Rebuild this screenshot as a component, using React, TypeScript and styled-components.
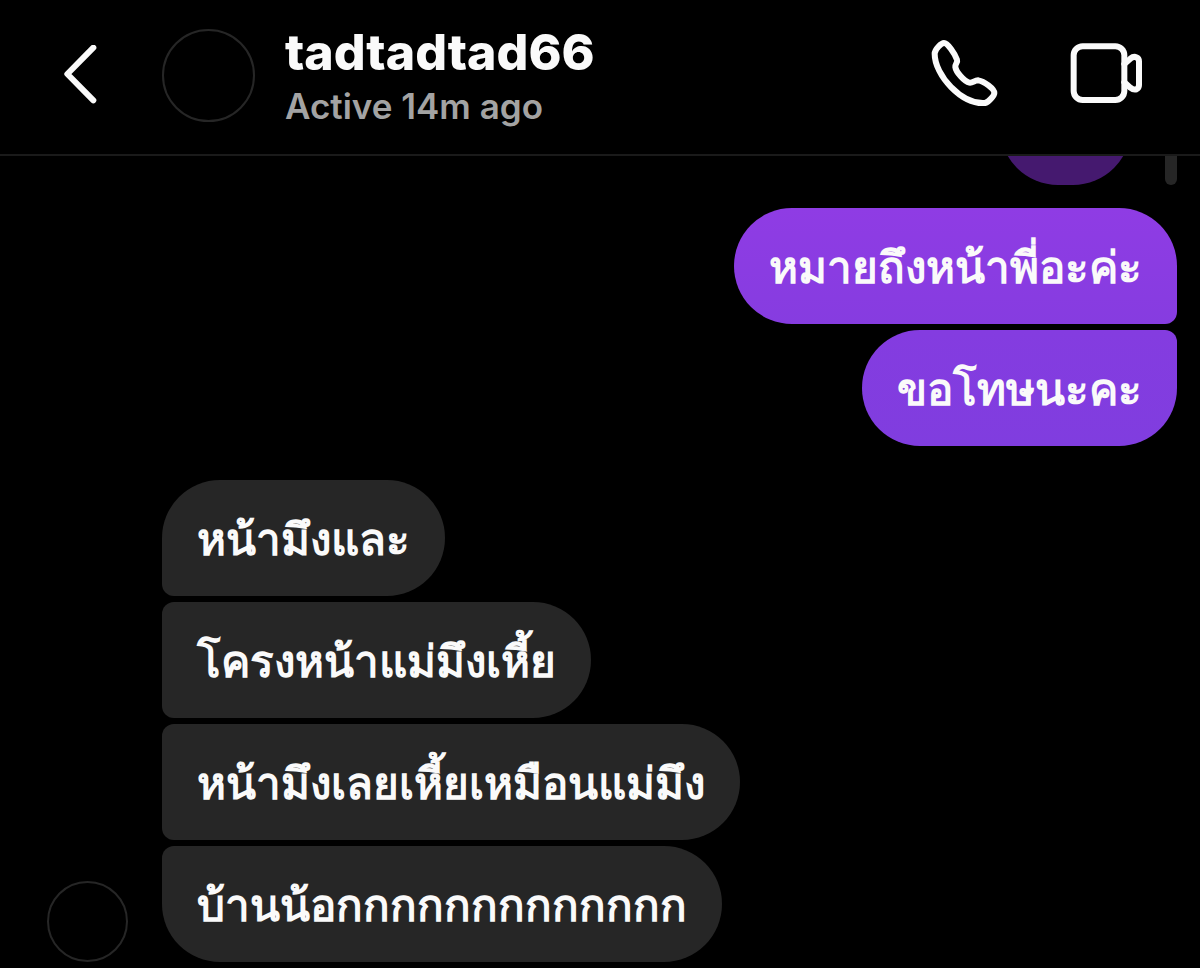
import React from 'react';
import styled, { createGlobalStyle } from 'styled-components';

const GlobalStyle = createGlobalStyle`
  *, *::before, *::after { box-sizing: border-box; }
  body {
    margin: 0;
    background: #000;
    color: #fafafa;
    font-family: Inter, "Liberation Sans", sans-serif;
  }
`;

const Screen = styled.div`
  min-height: 100vh;
  display: flex;
  flex-direction: column;
  overflow-x: hidden;
`;

const Header = styled.header`
  display: flex;
  align-items: center;
  padding: 21px 55px 25px 63px;
  border-bottom: 2px solid #1a1a1a;
`;

const IconButton = styled.button`
  display: flex;
  padding: 0;
  border: 0;
  background: none;
  color: #fafafa;
  cursor: pointer;

  svg {
    display: block;
    fill: none;
    stroke: currentColor;
    stroke-width: 18;
    stroke-linecap: round;
    stroke-linejoin: round;
  }
`;

const Avatar = styled.div<{ $size: number }>`
  flex: none;
  width: ${p => p.$size}px;
  height: ${p => p.$size}px;
  border: 2px solid #262626;
  border-radius: 50%;
`;

const Profile = styled.div`
  flex: 1;
  display: flex;
  align-items: center;
  gap: 30px;
  margin-left: 65px;
`;

const Name = styled.h1`
  margin: 0;
  font-size: 50px;
  line-height: 62px;
  font-weight: 800;
`;

const Status = styled.p`
  margin: 0;
  font-size: 35px;
  line-height: 46px;
  font-weight: 600;
  color: #a3a3a3;
`;

const Actions = styled.div`
  display: flex;
  gap: 69px;
`;

const Thread = styled.main`
  display: flex;
  flex-direction: column;
  padding: 0 23px 6px 47px;
`;

const ScrolledRow = styled.div`
  display: flex;
  justify-content: flex-end;
  align-items: flex-end;
  gap: 34px;
  height: 29px;
  margin-bottom: 23px;
  overflow: hidden;
`;

const ScrolledBubble = styled.div`
  flex: none;
  width: 131px;
  height: 116px;
  border-radius: 58px;
  background: #45196f;
`;

const ReplyBar = styled.div`
  flex: none;
  width: 12px;
  height: 116px;
  border-radius: 6px;
  background: #262626;
`;

const Incoming = styled.section`
  display: flex;
  align-items: flex-end;
  gap: 34px;
  margin-top: 34px;
`;

const Group = styled.div<{ $mine?: boolean }>`
  display: flex;
  flex-direction: column;
  align-items: ${p => (p.$mine ? 'flex-end' : 'flex-start')};
  gap: 6px;
`;

const Bubble = styled.p<{ $mine?: boolean; $tone?: string }>`
  margin: 0;
  padding: 28px 35px 24px;
  font-family: "Liberation Sans", sans-serif;
  font-size: 44px;
  line-height: 64px;
  font-weight: 700;
  background: ${p => p.$tone ?? '#262626'};
  border-radius: ${p => (p.$mine ? '58px 12px 12px 58px' : '12px 58px 58px 12px')};

  &:first-child {
    border-top-left-radius: 58px;
    border-top-right-radius: 58px;
  }

  &:last-child {
    border-bottom-left-radius: 58px;
    border-bottom-right-radius: 58px;
  }
`;

const sent = [
  { text: 'หมายถึงหน้าพี่อะค่ะ', tone: 'linear-gradient(#8f3ce4, #863ce0)' },
  { text: 'ขอโทษนะคะ', tone: 'linear-gradient(#843ce0, #803ddf)' },
];

const received = [
  'หน้ามึงและ',
  'โครงหน้าแม่มึงเหี้ย',
  'หน้ามึงเลยเหี้ยเหมือนแม่มึง',
  'บ้านน้อกกกกกกกกกกกกก',
];

const BackIcon = () => (
  <svg width="34" height="60" viewBox="190 134 102 180">
    <path d="M281 142L203 221L281 300" />
  </svg>
);

const PhoneIcon = () => (
  <svg width="70" height="70" viewBox="90 60 210 210">
    <path d="M132 69C143 69 164 100 171 119C174 128 165 131 166 141C168 156 193 185 208 188C218 190 224 180 235 181C252 184 283 206 283 219C283 228 264 247 255 249C185 254 104 166 104 101C104 88 124 69 132 69Z" />
  </svg>
);

const VideoIcon = () => (
  <svg width="76" height="70" viewBox="507 60 228 210">
    <rect x="521" y="79" width="152" height="161" rx="27" />
    <path d="M673 132L691 116Q701 108 709 112Q717 115 717 124V195Q717 204 709 208Q701 211 691 203L673 187" />
  </svg>
);

export default function App() {
  return (
    <Screen>
      <GlobalStyle />
      <Header>
        <IconButton aria-label="Back"><BackIcon /></IconButton>
        <Profile>
          <Avatar $size={93} />
          <div>
            <Name>tadtadtad66</Name>
            <Status>Active 14m ago</Status>
          </div>
        </Profile>
        <Actions>
          <IconButton aria-label="Audio call"><PhoneIcon /></IconButton>
          <IconButton aria-label="Video call"><VideoIcon /></IconButton>
        </Actions>
      </Header>
      <Thread>
        <ScrolledRow>
          <ScrolledBubble />
          <ReplyBar />
        </ScrolledRow>
        <Group $mine>
          {sent.map(m => <Bubble key={m.text} $mine $tone={m.tone}>{m.text}</Bubble>)}
        </Group>
        <Incoming>
          <Avatar $size={81} />
          <Group>
            {received.map(text => <Bubble key={text}>{text}</Bubble>)}
          </Group>
        </Incoming>
      </Thread>
    </Screen>
  );
}
